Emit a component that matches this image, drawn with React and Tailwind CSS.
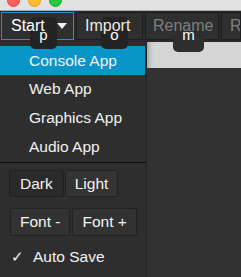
export default function App() {
  const items = ["Console App", "Web App", "Graphics App", "Audio App"];

  return (
    <div className="w-[241px] h-[277px] overflow-hidden flex flex-col bg-[#323232] font-['Liberation_Sans',Arial,sans-serif] text-[#f2f2f2]">
      {/* title bar */}
      <div className="h-[11px] shrink-0 bg-[#e2e2e2] border-b border-[#a9a9a9] flex gap-[8px] pl-[7px] overflow-hidden">
        <span className="w-[13px] h-[13px] -mt-[6px] rounded-full bg-[#fc5f57] border border-[#e0443e]" />
        <span className="w-[13px] h-[13px] -mt-[6px] rounded-full bg-[#fdbc2e] border border-[#dea123]" />
        <span className="w-[13px] h-[13px] -mt-[6px] rounded-full bg-[#28c840] border border-[#1aab29]" />
      </div>

      {/* toolbar */}
      <div className="relative h-[31px] shrink-0 bg-[#2a2a2a] flex gap-[2px] pl-[1px] pt-[1px] pb-[2px] whitespace-nowrap">
        <div className="w-[73px] flex items-center pl-[9px] gap-[12px] bg-[#2f2f2f] border border-[#1d93c9] text-[16px] text-white">
          <span className="relative z-20">Start</span>
          <svg width="10" height="7" viewBox="0 0 10 7" className="relative z-20">
            <path d="M0 0 H10 L5 6 Z" fill="#f2f2f2" />
          </svg>
        </div>
        <div className="w-[67px] flex items-center pl-[8px] bg-[#2f2f2f] border border-[#1e1e1e] text-[16px] text-[#eeeae0]">
          <span className="relative z-20">Import</span>
        </div>
        <div className="w-[74px] flex items-center pl-[7px] bg-[#2f2f2f] border border-[#1e1e1e] text-[16px] text-[#7f7f7f]">
          <span className="relative z-20">Rename</span>
        </div>
        <div className="flex-1 flex items-center pl-[8px] bg-[#2f2f2f] border border-[#1e1e1e] text-[16px] text-[#7f7f7f] overflow-hidden">
          Remove
        </div>

        {/* tooltips */}
        <div className="absolute left-[30px] top-[6px] w-[27px] h-[32px] rounded-[5px] bg-[#232323] z-10 flex justify-center pt-[10px] text-[15px] text-white leading-none">
          <span className="relative z-30">p</span>
        </div>
        <div className="absolute left-[101px] top-[6px] w-[27px] h-[32px] rounded-[5px] bg-[#232323] z-10 flex justify-center pt-[10px] text-[15px] text-white leading-none">
          <span className="relative z-30">o</span>
        </div>
        <div className="absolute left-[173px] top-[6px] w-[31px] h-[35px] rounded-[5px] bg-[#2e2e2e] z-10 flex justify-center pt-[10px] text-[15px] text-white leading-none">
          <span className="relative z-30">m</span>
        </div>
      </div>

      {/* body */}
      <div className="flex-1 flex">
        {/* dropdown menu */}
        <div className="w-[147px] shrink-0 bg-[#2e2e2e] border-r border-[#232323] pt-[4px] flex flex-col text-[15.5px] whitespace-nowrap">
          {items.map((t, i) => (
            <div
              key={t}
              className={`h-[28.7px] flex items-center pl-[29px] ${i === 0 ? "bg-[#0a95c8] mr-[1px]" : ""}`}
            >
              {t}
            </div>
          ))}
          <div className="h-[1px] bg-[#0c0c0c] mt-[1px]" />
          <div className="flex gap-[1px] pl-[9px] mt-[7px]">
            <div className="h-[27px] px-[10px] flex items-center bg-[#2a2a2a] border border-[#202020] rounded-[2px]">
              Dark
            </div>
            <div className="h-[27px] px-[9px] flex items-center bg-[#343434] border border-[#222222] rounded-[2px]">
              Light
            </div>
          </div>
          <div className="flex gap-[2px] pl-[10px] mt-[11px]">
            <div className="h-[28px] px-[9px] flex items-center bg-[#323232] border border-[#222222] rounded-[2px]">
              Font -
            </div>
            <div className="h-[28px] px-[9px] flex items-center bg-[#323232] border border-[#222222] rounded-[2px]">
              Font +
            </div>
          </div>
          <div className="flex items-center gap-[9px] pl-[11px] mt-[10px] h-[22px]">
            <span className="text-[15px]">✓</span>
            <span>Auto Save</span>
          </div>
        </div>

        {/* right side */}
        <div className="flex-1 flex flex-col">
          <div className="h-[26px] bg-[#d5d5d5] shadow-[inset_6px_0_5px_-4px_rgba(0,0,0,0.25)]" />
          <div className="flex-1 bg-[#323232]" />
        </div>
      </div>
    </div>
  );
}
